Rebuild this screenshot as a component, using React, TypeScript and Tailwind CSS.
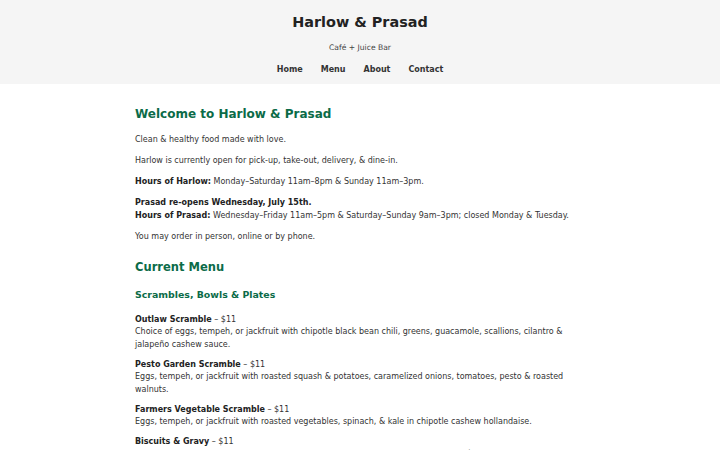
import React from "react";

const items = [
  {
    name: "Outlaw Scramble",
    price: "$11",
    desc: "Choice of eggs, tempeh, or jackfruit with chipotle black bean chili, greens, guacamole, scallions, cilantro & jalapeño cashew sauce.",
  },
  {
    name: "Pesto Garden Scramble",
    price: "$11",
    desc: "Eggs, tempeh, or jackfruit with roasted squash & potatoes, caramelized onions, tomatoes, pesto & roasted walnuts.",
  },
  {
    name: "Farmers Vegetable Scramble",
    price: "$11",
    desc: "Eggs, tempeh, or jackfruit with roasted vegetables, spinach, & kale in chipotle cashew hollandaise.",
  },
  {
    name: "Biscuits & Gravy",
    price: "$11",
    desc: "GF biscuits smothered in house-made sausage gravy with roasted potatoes & sautéed greens.",
  },
];

export default function App() {
  return (
    <div
      className="min-h-[450px] bg-white text-[#333]"
      style={{ fontFamily: '"DejaVu Sans", sans-serif' }}
    >
      <header className="bg-[#f5f5f5] pt-[12.5px] pb-[8.5px] text-center">
        <h1 className="text-[14.4px] leading-[18px] font-bold text-[#222]">Harlow &amp; Prasad</h1>
        <p className="mt-[11.5px] text-[7.6px] leading-[12px] text-[#444]">Café + Juice Bar</p>
        <nav className="mt-[9.5px] flex justify-center gap-[18px] text-[8px] leading-[12px] font-bold text-[#333]">
          <a href="#">Home</a>
          <a href="#">Menu</a>
          <a href="#">About</a>
          <a href="#">Contact</a>
        </nav>
      </header>

      <main className="mx-auto w-[450px] text-[8px] leading-[12.6px]">
        <h2 className="mt-[22px] text-[12px] leading-[16px] font-bold text-[#0b6b48]">
          Welcome to Harlow &amp; Prasad
        </h2>
        <div className="mt-[12.4px] flex flex-col gap-[8.4px]">
          <p>Clean &amp; healthy food made with love.</p>
          <p>Harlow is currently open for pick-up, take-out, delivery, &amp; dine-in.</p>
          <p>
            <b className="text-[#222]">Hours of Harlow:</b> Monday–Saturday 11am–8pm &amp; Sunday 11am–3pm.
          </p>
          <p>
            <b className="text-[#222]">Prasad re-opens Wednesday, July 15th.</b>
            <br />
            <b className="text-[#222]">Hours of Prasad:</b> Wednesday–Friday 11am–5pm &amp; Saturday–Sunday 9am–3pm; closed Monday &amp; Tuesday.
          </p>
          <p>You may order in person, online or by phone.</p>
        </div>

        <h2 className="mt-[16.6px] text-[11.5px] leading-[14px] font-bold text-[#0b6b48]">Current Menu</h2>
        <h3 className="mt-[14.4px] text-[9.4px] leading-[12px] font-bold text-[#0b6b48]">
          Scrambles, Bowls &amp; Plates
        </h3>
        <div className="mt-[13.3px] flex flex-col gap-[7.2px]">
          {items.map((it) => (
            <p key={it.name}>
              <b className="text-[#222]">{it.name}</b> – {it.price}
              <br />
              {it.desc}
            </p>
          ))}
        </div>
      </main>
    </div>
  );
}
